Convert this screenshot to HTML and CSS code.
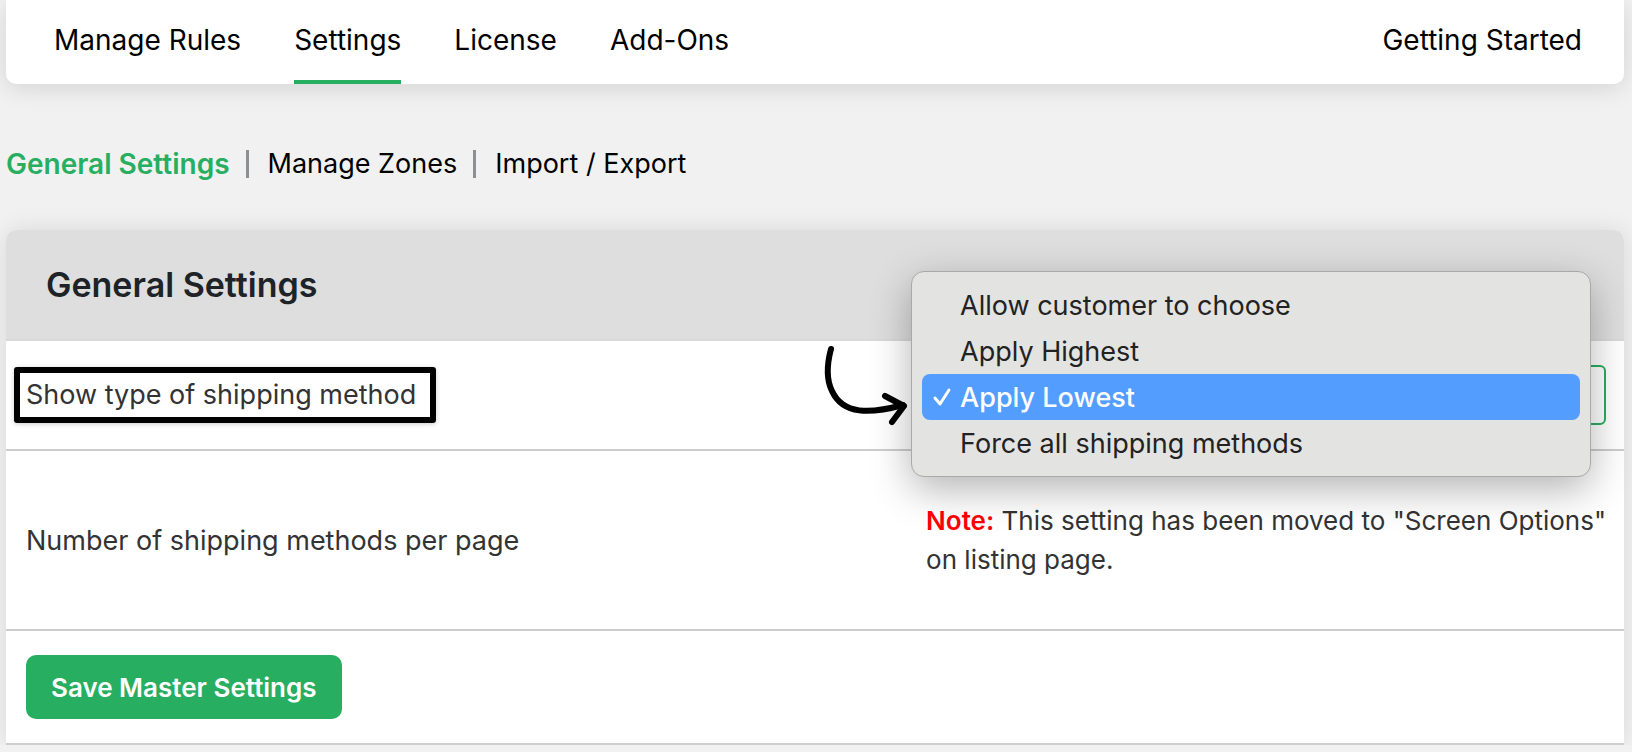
FILE: index.html
```html
<!DOCTYPE html>
<html lang="en">
<head>
    <meta charset="UTF-8">
    <meta name="viewport" content="width=device-width, initial-scale=1.0">
    <title>General Settings</title>
    <link rel="stylesheet" href="styles.css">
</head>
<body>

<!-- Plugin header menu -->
<header class="plugin-header">
    <nav class="main-menu">
        <a href="#">Manage Rules</a>
        <a href="#" class="active">Settings</a>
        <a href="#">License</a>
        <a href="#">Add-Ons</a>
        <a href="#" class="menu-right">Getting Started</a>
    </nav>
</header>

<!-- Sub menu -->
<nav class="sub-menu">
    <a href="#" class="current">General Settings</a>
    <a href="#">Manage Zones</a>
    <a href="#">Import / Export</a>
</nav>

<!-- Settings -->
<form class="settings-panel">
    <h2>General Settings</h2>
    <table class="form-table">
        <tr>
            <th scope="row"><label class="highlight" for="shippingType">Show type of shipping method</label></th>
            <td>
                <div class="select-box">
                    <select id="shippingType" name="shippingType">
                        <option>Allow customer to choose</option>
                        <option>Apply Highest</option>
                        <option selected>Apply Lowest</option>
                        <option>Force all shipping methods</option>
                    </select>
                    <svg class="arrow" viewBox="0 0 90 90" aria-hidden="true">
                        <path d="M13 12C9 27 8 42 14 54C25 78 52 77 85 68"/>
                        <path d="M67 59L86 69L74 85"/>
                    </svg>
                    <ul class="select-menu" role="listbox" aria-label="Show type of shipping method">
                        <li role="option">Allow customer to choose</li>
                        <li role="option">Apply Highest</li>
                        <li role="option" class="selected" aria-selected="true">
                            <svg class="check" viewBox="0 0 20 20" aria-hidden="true"><path d="M3 11L8 17L17 3"/></svg>Apply Lowest
                        </li>
                        <li role="option">Force all shipping methods</li>
                    </ul>
                </div>
            </td>
        </tr>
        <tr class="note-row">
            <th scope="row">Number of shipping methods per page</th>
            <td><p class="note"><b>Note:</b> This setting has been moved to "Screen Options" on listing page.</p></td>
        </tr>
        <tr>
            <td colspan="2" class="submit-cell"><button type="button" class="save-btn">Save Master Settings</button></td>
        </tr>
    </table>
</form>

</body>
</html>
```

FILE: styles.css
```css
* {
    box-sizing: border-box;
}

body {
    margin: 0;
    padding: 0 8px 0 6px;
    background-color: #f1f1f1;
    font-family: Inter, "Liberation Sans", sans-serif;
    font-size: 27px;
    color: #333;
}

a {
    color: #000;
    text-decoration: none;
}

/* Header */
.plugin-header {
    background: #fff;
    border-radius: 0 0 10px 10px;
    box-shadow: 0 4px 24px rgba(0, 0, 0, 0.12);
    padding: 0 42px 0 48px;
}

.main-menu {
    display: flex;
    gap: 53px;
    font-size: 28px;
}

.main-menu a {
    height: 84px;
    line-height: 80px;
    border-bottom: 4px solid transparent;
}

.main-menu a.active {
    border-bottom-color: #27ae60;
}

.main-menu .menu-right {
    margin-left: auto;
}

/* Sub menu */
.sub-menu {
    display: flex;
    align-items: center;
    height: 146px;
    padding-top: 14px;
}

.sub-menu a + a {
    margin-left: 16px;
    padding-left: 19px;
    border-left: 3px solid #8c8f94;
    line-height: 28px;
}

.sub-menu .current {
    color: #27ae60;
    font-size: 28px;
    font-weight: 600;
}

/* Settings panel */
.settings-panel {
    background: #fff;
    border-radius: 10px 10px 0 0;
    box-shadow: 0 0 24px rgba(0, 0, 0, 0.1);
}

.settings-panel h2 {
    margin: 0;
    padding: 0 40px;
    height: 111px;
    line-height: 110px;
    background: #dedede;
    border-bottom: 2px solid #d9d9d9;
    border-radius: 10px 10px 0 0;
    font-size: 34px;
    font-weight: 600;
    color: #1d2327;
}

.form-table {
    width: 100%;
    border-collapse: separate;
    border-spacing: 0;
}

.form-table th,
.form-table td {
    padding: 24px 18px 24px 14px;
    border-bottom: 2px solid #cdcdcd;
    text-align: left;
    vertical-align: middle;
    font-weight: 400;
}

.form-table th {
    width: 56%;
    padding-left: 20px;
}

.form-table .note-row td {
    padding-top: 50px;
    padding-right: 10px;
    padding-bottom: 50px;
}

.form-table .submit-cell {
    padding-left: 20px;
}

.highlight {
    display: inline-block;
    margin-left: -12px;
    padding: 6px 14px 6px 6px;
    border: 6px solid #000;
    border-radius: 3px;
    line-height: 32px;
    box-shadow: 0 1px 5px rgba(0, 0, 0, 0.2);
}

.note {
    margin: 0;
    font-size: 26px;
    line-height: 39px;
}

.note b {
    color: #f00;
    font-weight: 600;
}

/* Dropdown */
.select-box {
    position: relative;
}

.select-box select {
    display: block;
    width: 100%;
    height: 60px;
    padding: 0 16px;
    border: 2px solid #27ae60;
    border-radius: 6px;
    background: #fff;
    font: inherit;
    appearance: none;
}

.select-menu {
    position: absolute;
    top: -94px;
    left: -15px;
    right: 15px;
    margin: 0;
    padding: 10px;
    list-style: none;
    background: #e3e3e1;
    border: 1px solid #a9a9a9;
    border-radius: 13px;
    box-shadow: 0 12px 40px rgba(0, 0, 0, 0.3);
    color: #222;
}

.select-menu li {
    height: 46px;
    padding-left: 38px;
    border-radius: 8px;
    line-height: 48px;
}

.select-menu .selected {
    position: relative;
    background: #539dff;
    color: #fff;
    font-weight: 500;
}

.check {
    position: absolute;
    left: 10px;
    top: 13px;
    width: 20px;
    height: 20px;
    fill: none;
    stroke: #fff;
    stroke-width: 3;
    stroke-linecap: round;
    stroke-linejoin: round;
}

/* Pointer to the open dropdown */
.arrow {
    position: absolute;
    top: -28px;
    left: -108px;
    width: 90px;
    height: 90px;
    fill: none;
    stroke: #000;
    stroke-width: 6;
    stroke-linecap: round;
    stroke-linejoin: round;
}

.save-btn {
    display: block;
    height: 64px;
    padding: 0 25px;
    border: none;
    border-radius: 10px;
    background: #27ae60;
    color: #fff;
    font-family: inherit;
    font-size: 26px;
    font-weight: 600;
    cursor: pointer;
}
```
